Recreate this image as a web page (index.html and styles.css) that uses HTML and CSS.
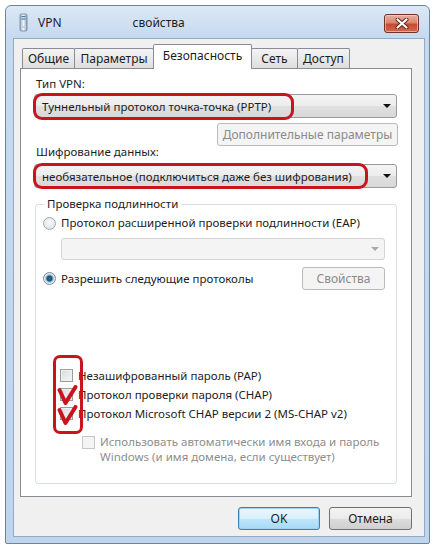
FILE: index.html
```html
<!DOCTYPE html>
<html lang="ru">
<head>
<meta charset="utf-8">
<title>VPN свойства</title>
<link rel="stylesheet" href="styles.css">
</head>
<body>
<div class="page">
  <div class="window">
    <div class="titlebar">
      <svg class="app-icon" width="9" height="19" viewBox="0 0 9 19">
        <defs>
          <linearGradient id="ig" x1="0" y1="0" x2="1" y2="0">
            <stop offset="0" stop-color="#9fb4c8"/>
            <stop offset="0.5" stop-color="#eef3f8"/>
            <stop offset="1" stop-color="#8ea3b8"/>
          </linearGradient>
        </defs>
        <rect x="1" y="1" width="7" height="17" rx="1.5" fill="url(#ig)" stroke="#6d8196" stroke-width="0.8"/>
        <rect x="2.5" y="3" width="4" height="1.2" fill="#4f7fae"/>
        <rect x="2.5" y="5.5" width="4" height="1.2" fill="#4f7fae"/>
        <rect x="2.5" y="13" width="4" height="2" fill="#c7d3de"/>
      </svg>
      <span class="title-name">VPN</span>
      <span class="title-suffix">свойства</span>
      <div class="close-btn">
        <svg width="14" height="11" viewBox="0 0 14 11">
          <path d="M2.5 1.5 L11.5 9.5 M11.5 1.5 L2.5 9.5" stroke="#5a2418" stroke-width="4" stroke-linecap="round"/>
          <path d="M2.5 1.5 L11.5 9.5 M11.5 1.5 L2.5 9.5" stroke="#ffffff" stroke-width="2.2" stroke-linecap="round"/>
        </svg>
      </div>
    </div>

    <div class="client">
      <div class="tabs">
        <div class="tab tab-general">Общие</div>
        <div class="tab tab-params">Параметры</div>
        <div class="tab tab-security active">Безопасность</div>
        <div class="tab tab-net">Сеть</div>
        <div class="tab tab-access">Доступ</div>
      </div>

      <div class="panel">
        <div class="field-label">Тип VPN:</div>
        <div class="combo combo-type">
          <span class="combo-text">Туннельный протокол точка-точка (PPTP)</span>
          <span class="combo-arrow"></span>
        </div>
        <div class="btn-row">
          <div class="btn btn-disabled btn-extra">Дополнительные параметры</div>
        </div>
        <div class="field-label label-enc">Шифрование данных:</div>
        <div class="combo combo-enc">
          <span class="combo-text">необязательное (подключиться даже без шифрования)</span>
          <span class="combo-arrow"></span>
        </div>

        <fieldset class="group">
          <legend>Проверка подлинности</legend>
          <div class="radio-row row-eap">
            <span class="radio"></span>
            <span>Протокол расширенной проверки подлинности (EAP)</span>
          </div>
          <div class="combo combo-disabled">
            <span class="combo-text"></span>
            <span class="combo-arrow arrow-disabled"></span>
          </div>
          <div class="allow-row">
            <div class="radio-row">
              <span class="radio checked"></span>
              <span>Разрешить следующие протоколы</span>
            </div>
            <div class="btn btn-disabled btn-props">Свойства</div>
          </div>
          <div class="checks">
            <div class="check-row"><span class="check"></span><span>Незашифрованный пароль (PAP)</span></div>
            <div class="check-row"><span class="check"></span><span>Протокол проверки пароля (CHAP)</span></div>
            <div class="check-row"><span class="check"></span><span>Протокол Microsoft CHAP версии 2 (MS-CHAP v2)</span></div>
          </div>
          <div class="auto-row">
            <span class="check check-disabled"></span>
            <span class="auto-text">Использовать автоматически имя входа и пароль<br>Windows (и имя домена, если существует)</span>
          </div>
        </fieldset>

        <div class="mark mark-type"></div>
        <div class="mark mark-enc"></div>
        <div class="mark mark-checks"></div>
        <svg class="tick tick-1" width="21" height="21" viewBox="0 0 21 21">
          <path d="M2.5 5 L8.5 18 L18.5 2" fill="none" stroke="#c8141e" stroke-width="4" stroke-linecap="round" stroke-linejoin="round"/>
        </svg>
        <svg class="tick tick-2" width="21" height="21" viewBox="0 0 21 21">
          <path d="M2.5 5 L8.5 18 L18.5 2" fill="none" stroke="#c8141e" stroke-width="4" stroke-linecap="round" stroke-linejoin="round"/>
        </svg>
      </div>

      <div class="dialog-buttons">
        <div class="btn btn-default btn-ok">OK</div>
        <div class="btn btn-cancel">Отмена</div>
      </div>
    </div>
  </div>
</div>
</body>
</html>
```

FILE: styles.css
```css
* {
  box-sizing: border-box;
}

html, body {
  margin: 0;
  background: #ffffff;
}

body {
  font-family: "Noto Sans", "Liberation Sans", sans-serif;
  font-size: 11.5px;
  color: #1c1c1c;
}

.page {
  padding: 5px 0 0 5px;
}

.window {
  width: 425px;
  height: 539px;
  border: 1px solid #6f839b;
  border-radius: 6px 6px 2px 2px;
  background: linear-gradient(180deg, #dce9f6 0px, #c6daef 30px, #bfd5ee 100%);
  display: flex;
  flex-direction: column;
}

/* ---------- title bar ---------- */
.titlebar {
  height: 32px;
  display: flex;
  align-items: center;
  padding-left: 13px;
  flex: 0 0 auto;
}

.app-icon {
  display: block;
  margin-top: 1px;
}

.title-name {
  margin-left: 10px;
  font-size: 12px;
  color: #1e1e1e;
}

.title-suffix {
  margin-left: 71px;
  font-size: 12px;
  color: #1e1e1e;
}

.close-btn {
  margin-left: auto;
  margin-right: 10px;
  align-self: flex-start;
  margin-top: 8px;
  width: 35px;
  height: 19px;
  border: 1px solid #6e3328;
  border-radius: 3px;
  background: linear-gradient(180deg, #e6b0a2 0%, #d9866f 45%, #c84a30 55%, #d06a4f 100%);
  box-shadow: inset 0 0 0 1px rgba(255, 220, 210, 0.55);
  display: flex;
  align-items: center;
  justify-content: center;
}

.close-btn svg {
  display: block;
}

/* ---------- client area ---------- */
.client {
  flex: 1 1 auto;
  margin: 0 4px 6px 7px;
  border: 1px solid #95a9bf;
  background: #f0f0f0;
  padding: 5px 12px 0 6px;
  display: flex;
  flex-direction: column;
}

.tabs {
  display: flex;
  align-items: flex-end;
  height: 25px;
  padding-left: 2px;
  margin-bottom: -1px;
  position: relative;
  z-index: 2;
}

.tab {
  height: 20px;
  margin-bottom: 1px;
  border: 1px solid #898c95;
  border-bottom: none;
  border-radius: 2px 2px 0 0;
  background: linear-gradient(180deg, #f4f4f4 0%, #e9e9e9 50%, #dedede 100%);
  display: flex;
  align-items: center;
  justify-content: center;
  color: #1c1c1c;
  margin-left: -1px;
  padding-bottom: 1px;
  font-size: 12px;
}

.tab:first-child {
  margin-left: 0;
}

.tab.active {
  height: 25px;
  margin-bottom: 0;
  background: #ffffff;
  position: relative;
  z-index: 3;
  padding-bottom: 4px;
}

.tab-general { width: 53px; }
.tab-params { width: 80px; }
.tab-security { width: 99px; }
.tab-net { width: 47px; }
.tab-access { width: 53px; }

/* ---------- panel ---------- */
.panel {
  position: relative;
  height: 429px;
  border: 1px solid #898c95;
  background: #ffffff;
  padding: 7px 14px 0 13px;
  display: flex;
  flex-direction: column;
}

.field-label {
  line-height: 16px;
  padding-left: 2px;
}

.label-enc {
  margin-top: -2px;
}

.combo {
  display: flex;
  align-items: center;
  height: 24px;
  border: 1px solid #9a9a9a;
  border-radius: 3px;
  background: linear-gradient(180deg, #f4f4f4 0%, #ececec 50%, #e0e0e0 51%, #d8d8d8 100%);
  padding: 0 4px 0 7px;
}

.combo-type {
  margin-top: 2px;
}

.combo-enc {
  margin-top: 4px;
}

.combo-text {
  flex: 1 1 auto;
  white-space: nowrap;
}

.combo-arrow {
  width: 0;
  height: 0;
  border-left: 4px solid transparent;
  border-right: 4px solid transparent;
  border-top: 4px solid #111111;
  margin-right: 1px;
}

.arrow-disabled {
  border-top-color: #a8a8a8;
}

.combo-disabled {
  height: 22px;
  margin: 7px 0 0 18px;
  border-color: #d4d4d4;
  background: #f4f4f4;
}

.btn-row {
  display: flex;
  justify-content: flex-end;
  margin-top: 5px;
}

.btn {
  height: 23px;
  border: 1px solid #707070;
  border-radius: 3px;
  background: linear-gradient(180deg, #f3f3f3 0%, #ebebeb 50%, #dddddd 51%, #cfcfcf 100%);
  display: flex;
  align-items: center;
  justify-content: center;
  color: #1c1c1c;
  white-space: nowrap;
  font-size: 12px;
}

.btn-disabled {
  border-color: #b9bcbf;
  background: #f4f4f4;
  color: #8a8a8a;
}

.btn-extra {
  width: 181px;
  margin-right: -1px;
}

.btn-props {
  width: 83px;
}

/* ---------- group box ---------- */
.group {
  margin: 8px 0 0 1px;
  padding: 0 11px 19px 7px;
  border: 1px solid #d5dfe5;
  border-radius: 3px;
  min-width: 0;
}

.group legend {
  padding: 0 3px;
  margin-left: 1px;
  line-height: 16px;
}

.radio-row {
  display: flex;
  align-items: center;
  gap: 5px;
  line-height: 16px;
}

.row-eap {
  margin-top: 3px;
}

.radio {
  width: 13px;
  height: 13px;
  border-radius: 50%;
  border: 1px solid #a4a8ac;
  background: radial-gradient(circle at 50% 40%, #fbfbfb 0%, #e2e4e6 70%, #cfd3d6 100%);
  flex: 0 0 auto;
  position: relative;
}

.radio.checked {
  border-color: #7d8a96;
  background: radial-gradient(circle at 50% 50%, #2a6d95 0%, #1b4f73 30%, #7fb2cf 44%, #e7eef3 62%, #d4dbe1 100%);
}

.allow-row {
  display: flex;
  align-items: center;
  justify-content: space-between;
  margin-top: 7px;
  height: 23px;
}

.checks {
  margin: 76px 0 0 17px;
}

.check-row {
  display: flex;
  align-items: center;
  gap: 5px;
  height: 19px;
}

.check {
  width: 13px;
  height: 13px;
  border: 1px solid #9c9c9c;
  background: linear-gradient(135deg, #d9d9d9 0%, #ececec 60%, #f7f7f7 100%);
  box-shadow: inset 0 0 0 1px #f2f2f2;
  flex: 0 0 auto;
}

.check-disabled {
  border-color: #c6c6c6;
  background: #f4f4f4;
  box-shadow: none;
  margin-top: 2px;
}

.auto-row {
  display: flex;
  align-items: flex-start;
  gap: 5px;
  margin: 11px 0 0 39px;
}

.auto-text {
  line-height: 15px;
  color: #8d8d8d;
  white-space: nowrap;
}

/* ---------- annotations (over the content) ---------- */
.mark {
  position: absolute;
  border: 3px solid #c8141e;
  border-radius: 9px;
}

.mark-type {
  left: 12px;
  top: 24px;
  width: 261px;
  height: 27px;
}

.mark-enc {
  left: 12px;
  top: 94px;
  width: 335px;
  height: 26px;
}

.mark-checks {
  left: 32px;
  top: 286px;
  width: 30px;
  height: 79px;
  border-radius: 7px;
}

.tick {
  position: absolute;
  left: 36px;
}

.tick-1 {
  top: 316px;
}

.tick-2 {
  top: 336px;
}

/* ---------- dialog buttons ---------- */
.dialog-buttons {
  display: flex;
  justify-content: flex-end;
  gap: 9px;
  margin-top: 10px;
}

.btn-ok {
  width: 82px;
}

.btn-cancel {
  width: 83px;
}

.btn-default {
  border-color: #3c7fb1;
  box-shadow: inset 0 0 0 1px #9fd3f0;
  background: linear-gradient(180deg, #eaf6fd 0%, #d9f0fc 50%, #bee6fd 51%, #a7d9f5 100%);
}
```
